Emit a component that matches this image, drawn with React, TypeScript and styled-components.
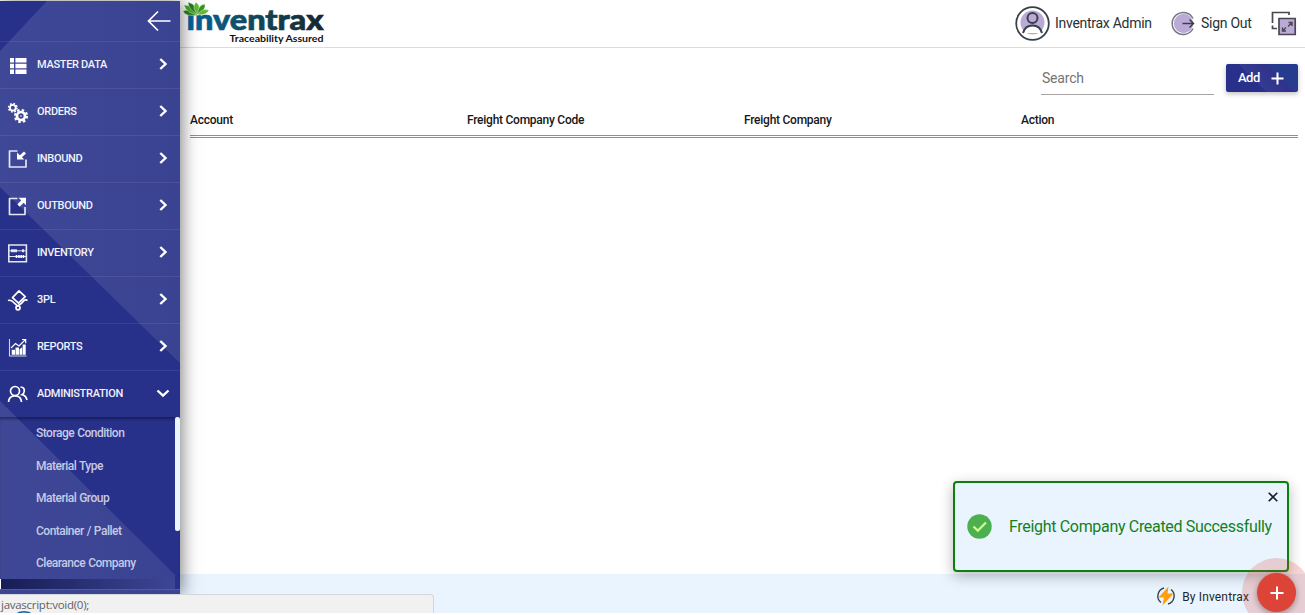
import React from "react";
import styled, { createGlobalStyle } from "styled-components";

const GlobalStyle = createGlobalStyle`
  * { box-sizing: border-box; }
  body { margin: 0; background: #fff; font-family: Roboto, "Liberation Sans", sans-serif; overflow: hidden; }
`;

const Page = styled.div`
  position: relative;
  display: flex;
  width: 1305px;
  height: 615px;
  padding-bottom: 2px;
  overflow: hidden;
  background: #fff;
`;

const Sidebar = styled.aside`
  position: relative;
  z-index: 2;
  flex: 0 0 180px;
  height: 594px;
  margin-top: 1px;
  background: #28318a;
  box-shadow: 2px 0 16px rgba(0, 0, 0, 0.5);
`;

const Facets = styled.svg`
  position: absolute;
  inset: 0;
  display: block;
`;

const SidebarContent = styled.div`
  position: relative;
  display: flex;
  flex-direction: column;
`;

const CollapseRow = styled.div`
  display: flex;
  justify-content: flex-end;
  align-items: center;
  height: 41px;
  padding-right: 9px;
  border-bottom: 1px solid rgba(255, 255, 255, 0.08);
`;

const MenuItem = styled.div<{ $last?: boolean }>`
  display: flex;
  align-items: center;
  height: ${(p) => (p.$last ? 46 : 47)}px;
  padding: 0 10px 2px 7px;
  color: #f1f2fa;
  font-size: 11px;
  font-weight: 500;
  border-bottom: ${(p) => (p.$last ? "0" : "1px solid rgba(255, 255, 255, 0.08)")};
`;

const MenuIcon = styled.span`
  display: flex;
  width: 22px;
  height: 22px;
  margin: 3px 8px 0 0;
`;

const MenuLabel = styled.span`
  flex: 1;
  white-space: nowrap;
  letter-spacing: -0.31px;
`;

const Submenu = styled.div`
  position: relative;
  height: 162px;
  padding-left: 36px;
  box-shadow: inset 0 3px 3px -1px rgba(0, 0, 0, 0.4);
`;

const SubmenuItem = styled.div`
  display: flex;
  align-items: center;
  height: 32.5px;
  color: #c6cae5;
  font-size: 12px;
  font-weight: 500;
  letter-spacing: -0.5px;
  word-spacing: 0.5px;
`;

const ScrollThumb = styled.div`
  position: absolute;
  top: 0;
  right: 0;
  width: 5px;
  height: 114px;
  border-radius: 2px;
  background: #ebf5ff;
`;

const SubmenuEnd = styled.div`
  width: 175px;
  height: 10px;
  border-left: 1px solid #fff;
  background: linear-gradient(90deg, #171d55, #3d4696);
`;

const SidebarEnd = styled.div`
  height: 5px;
  border-top: 1px solid #515aa5;
  background: #3c4594;
`;

const Main = styled.main`
  display: flex;
  flex: 1;
  flex-direction: column;
  min-width: 0;
`;

const Header = styled.header`
  display: flex;
  align-items: center;
  justify-content: space-between;
  height: 48px;
  padding-right: 8px;
  border-bottom: 1px solid #dcdcdc;
`;

const Logo = styled.svg`
  display: block;
  align-self: flex-start;
`;

const UserTools = styled.div`
  display: flex;
  align-items: center;
  color: #263238;
  font-size: 14px;
`;

const ToolLabel = styled.span<{ $gap: number; $width: number }>`
  width: ${(p) => p.$width}px;
  margin: -1px ${(p) => p.$gap}px 0 5px;
  white-space: nowrap;
  letter-spacing: -0.28px;
`;

const Body = styled.section`
  flex: 1;
  padding: 16px 7px 0 10px;
`;

const Toolbar = styled.div`
  display: flex;
  justify-content: flex-end;
  gap: 12px;
`;

const SearchField = styled.div`
  width: 173px;
  height: 31px;
  padding: 6px 0 0 1px;
  color: #747474;
  font-size: 14px;
  line-height: 17px;
  letter-spacing: -0.2px;
  border-bottom: 1px solid #a8a3a3;
`;

const AddButton = styled.div`
  display: flex;
  align-items: center;
  width: 72px;
  height: 28px;
  padding-left: 12px;
  border-radius: 2px;
  color: #fff;
  font-size: 13px;
  font-weight: 500;
  letter-spacing: -0.5px;
  background: linear-gradient(45deg, #28308a 38%, transparent 38%),
    linear-gradient(225deg, #263b8d 32%, #30318a 32%, #333c92 60%, #28308a 60%);
  box-shadow: 0 2px 5px rgba(0, 0, 0, 0.25);
  svg { margin: 1px 0 0 11px; }
  span { margin-top: -2px; }
`;

const TableHead = styled.div`
  display: grid;
  grid-template-columns: repeat(4, 1fr);
  height: 43px;
  padding-top: 18px;
  color: #171717;
  font-size: 12px;
  font-weight: 500;
  line-height: 14px;
  letter-spacing: -0.25px;
  border-bottom: 3px double #8f8f8f;
`;

const Footer = styled.footer`
  display: flex;
  align-items: center;
  justify-content: flex-end;
  gap: 6px;
  height: 39px;
  padding: 4px 56px 0 0;
  color: #212529;
  font-size: 12px;
  letter-spacing: 0.15px;
  background: #e9f4ff;
  span { margin-top: 2px; }
`;

const Toast = styled.div`
  position: absolute;
  z-index: 3;
  left: 953px;
  top: 481px;
  display: flex;
  align-items: center;
  width: 336px;
  height: 91px;
  padding-left: 12px;
  border: 2px solid #0a800d;
  border-radius: 4px;
  color: #15801b;
  font-size: 16px;
  background: #e9f4ff;
  box-shadow: 0 4px 14px rgba(0, 0, 0, 0.28);
`;

const ToastText = styled.span`
  margin-left: 17px;
  white-space: nowrap;
  letter-spacing: -0.32px;
`;

const CloseIcon = styled.svg`
  position: absolute;
  top: 9px;
  right: 9px;
`;

const FloatingAdd = styled.div`
  position: absolute;
  z-index: 4;
  left: 1257px;
  top: 573px;
  display: flex;
  align-items: center;
  justify-content: center;
  width: 39px;
  height: 39px;
  border-radius: 50%;
  background: #db4437;
  box-shadow: 0 0 0 15px rgba(219, 68, 55, 0.22), 0 2px 6px rgba(0, 0, 0, 0.4);
`;

const BottomEdge = styled.div`
  position: absolute;
  z-index: 6;
  left: 0;
  right: 0;
  bottom: 0;
  height: 2px;
  background: #fff;
`;

const StatusBar = styled.div`
  position: absolute;
  z-index: 5;
  left: 0;
  top: 594px;
  width: 434px;
  height: 20px;
  padding: 3px 0 0 1px;
  border: 1px solid #d3d7da;
  border-left: 0;
  border-bottom: 0;
  border-top-right-radius: 4px;
  color: #5f6163;
  font-family: "Open Sans", "Noto Sans", sans-serif;
  font-size: 11.5px;
  line-height: 14px;
  letter-spacing: -0.27px;
  background: #f1f1f1;
`;

const StatusArc = styled.svg`
  position: absolute;
  left: 12px;
  top: 15px;
`;

const icons: Record<string, React.ReactNode> = {
  master: (
    <g fill="#fff">
      <path d="M3 3h4v4.4H3zM8.400 3H19.500v4.400H8.400zM3 8.800h4v4.400H3zM8.400 8.800H19.500v4.400H8.400zM3 14.600h4V19H3zM8.400 14.600H19.500V19H8.400z" />
    </g>
  ),
  orders: (
    <g fill="none" stroke="#fff">
      <circle cx="5.800" cy="5.800" r="2.9" strokeWidth="1.8" />
      <circle cx="5.800" cy="5.800" r="4.2" strokeWidth="1.6" strokeDasharray="1.7 1.6" />
      <circle cx="14" cy="14" r="4" strokeWidth="2.7" />
      <circle cx="14" cy="14" r="6" strokeWidth="2.2" strokeDasharray="2.5 2.21" />
      <circle cx="14" cy="14" r=".8" fill="#fff" stroke="none" />
    </g>
  ),
  inbound: (
    <g fill="none" stroke="#e4e6f4" strokeWidth="1.7" strokeLinejoin="round">
      <path d="M10.500 2H2.500V18H19V10.500" />
      <path d="M18 3.500L12.500 8.500" strokeWidth="3" stroke="#fff" />
      <path d="M10 3.500V10.500h7.300z" fill="#fff" stroke="none" />
    </g>
  ),
  outbound: (
    <g fill="none" stroke="#e4e6f4" strokeWidth="1.7" strokeLinejoin="round">
      <path d="M10.500 2.500H2.500V18.500H18V11" />
      <path d="M11.500 9.500L16 5" strokeWidth="3.200" stroke="#fff" />
      <path d="M11.500 1.800h7.500v7.500z" fill="#fff" stroke="none" />
    </g>
  ),
  inventory: (
    <g fill="none" stroke="#e4e6f4" strokeWidth="1.6">
      <path d="M1.800 2h17.600v16.700H1.800z" />
      <path d="M2 7.800h17M2 13.500h17" strokeWidth="1" />
      <path d="M5 6.300v3M7 6.300v3M9 6.300v3M16 6.300v3M9.500 12v3M12 12v3M14.200 12v3M16.400 12v3" stroke="#fff" />
    </g>
  ),
  pl: (
    <g fill="none" stroke="#fff" strokeWidth="1.7" strokeLinejoin="round">
      <path d="M12 .900L18.200 6.700L11.500 13.200L5.500 7.700zM1 10.500Q4 9.500 6.500 12.300L10.500 15.900Q15 13.700 17 10.500Q18.500 9.300 20.500 10.500" />
      <circle cx="11" cy="17.800" r="2" />
    </g>
  ),
  reports: (
    <g fill="none" stroke="#fff">
      <path d="M2.500 2v17H19.500" strokeWidth="1.1" opacity=".8" />
      <path d="M4.700 17.800v-5H8v5zM8.500 17.800v-7.300h3.500v7.300zM12.500 17.800v-5.500l2.700-2v7.500zM15.700 17.800V7.500h3v10.300z" fill="#fff" stroke="none" />
      <path d="M4 11L8.500 6.500L12 9L18 3M15 2.500h3.700v3.700" strokeWidth="1.2" />
    </g>
  ),
  admin: (
    <g fill="none" stroke="#fff" strokeWidth="1.700">
      <circle cx="8" cy="7" r="4.500" />
      <path d="M1.500 18Q2 11.800 8 11.800T14.500 18M13.500 3Q18 3.500 17.200 7.500Q17 9.500 15 10.700Q19 11.500 20 16" />
    </g>
  ),
};

const menu = [
  { id: "master", label: "MASTER DATA" },
  { id: "orders", label: "ORDERS" },
  { id: "inbound", label: "INBOUND" },
  { id: "outbound", label: "OUTBOUND" },
  { id: "inventory", label: "INVENTORY" },
  { id: "pl", label: "3PL" },
  { id: "reports", label: "REPORTS" },
  { id: "admin", label: "ADMINISTRATION" },
];

const submenu = ["Storage Condition", "Material Type", "Material Group", "Container / Pallet", "Clearance Company"];
const columns = ["Account", "Freight Company Code", "Freight Company", "Action"];

const Chevron = ({ down }: { down?: boolean }) => (
  <svg width="14" height="14" viewBox="0 0 14 14" fill="none" stroke="#fff" strokeWidth="2.4">
    <path d={down ? "M1.500 4.500L7 9.700L12.500 4.500" : "M4.300 2L9.500 7L4.300 12"} />
  </svg>
);

const BrandLogo = () => (
  <Logo width="150" height="47" viewBox="180 0 150 47">
    <defs>
      <linearGradient id="brand" gradientUnits="userSpaceOnUse" x1="187" x2="323" y1="0" y2="0">
        <stop offset="0" stopColor="#04659c" />
        <stop offset=".5" stopColor="#12475c" />
        <stop offset="1" stopColor="#16262f" />
      </linearGradient>
    </defs>
    <text x="186.500" y="30.300" fill="url(#brand)" stroke="url(#brand)" strokeWidth=".7" fontFamily="Lato" fontWeight="900" fontSize="27.500" textLength="137" lengthAdjust="spacingAndGlyphs">
      {"\u0131nventrax"}
    </text>
    <text x="229.500" y="41.500" fill="#111" fontFamily="Lato" fontWeight="700" fontSize="10" textLength="94" lengthAdjust="spacingAndGlyphs">
      Traceability Assured
    </text>
    <g stroke="#fff" strokeWidth=".4">
      <path d="M198 15Q192 8 183 11Q185 17 198 15Z" fill="#278326" />
      <path d="M198 15Q195 5 184 5Q186 13 198 15Z" fill="#48a526" />
      <path d="M198 15Q198 5 188 2Q188 9 198 15Z" fill="#237d21" />
      <path d="M198 15Q202 7 196 2Q191 8 198 15Z" fill="#62b92d" />
      <path d="M198 15Q197 5 205 4Q206 10 198 15Z" fill="#359426" />
      <path d="M198 15Q201 8 209 10Q207 15 198 15Z" fill="#62b92d" />
    </g>
  </Logo>
);

export default function App() {
  return (
    <>
      <GlobalStyle />
      <Page>
        <Sidebar>
          <Facets width="180" height="594" viewBox="0 1 180 594">
            <defs>
              <linearGradient id="facet" x1="0" x2="1">
                <stop offset="0" stopColor="#3f4896" />
                <stop offset="1" stopColor="#394392" />
              </linearGradient>
            </defs>
            <path d="M47 1H180V363L0 187V51Z" fill="url(#facet)" />
            <path d="M0 401L175 575V595H0Z" fill="url(#facet)" />
          </Facets>
          <SidebarContent>
            <CollapseRow>
              <svg width="24" height="22" viewBox="0 0 24 22" fill="none" stroke="#fff" strokeWidth="1.700">
                <path d="M23.500 11H2M11 1.500L1.500 11L11 20.500" />
              </svg>
            </CollapseRow>
            {menu.map((m) => (
              <MenuItem key={m.id} $last={m.id === "admin"}>
                <MenuIcon>
                  <svg width="22" height="22" viewBox="0 0 22 22">{icons[m.id]}</svg>
                </MenuIcon>
                <MenuLabel>{m.label}</MenuLabel>
                <Chevron down={m.id === "admin"} />
              </MenuItem>
            ))}
            <Submenu>
              {submenu.map((s) => (
                <SubmenuItem key={s}>{s}</SubmenuItem>
              ))}
              <ScrollThumb />
            </Submenu>
            <SubmenuEnd />
            <SidebarEnd />
          </SidebarContent>
        </Sidebar>
        <Main>
          <Header>
            <BrandLogo />
            <UserTools>
              <svg width="35" height="35" viewBox="0 0 35 35" fill="none" stroke="#36404b">
                <circle cx="17.500" cy="17.500" r="16.300" strokeWidth="1.800" />
                <circle cx="17.500" cy="16.500" r="12" fill="#bcaad6" stroke="none" />
                <path d="M8 27Q10 19.500 17.500 19.500T27 27" fill="#fff" strokeWidth="2" />
                <circle cx="17.500" cy="12" r="5" fill="#bcaad6" strokeWidth="2" />
              </svg>
              <ToolLabel $gap={19} $width={97}>Inventrax Admin</ToolLabel>
              <svg width="25" height="25" viewBox="0 0 25 25" fill="none">
                <circle cx="12.500" cy="12.500" r="9.700" fill="#bcaad6" />
                <path d="M22 7.500A11 11 0 1 0 22 17.500" stroke="#777582" strokeWidth="1.500" />
                <path d="M11.500 12.500H22.500M18.500 8.500L22.500 12.500L18.500 16.500" stroke="#39404a" strokeWidth="1.500" />
              </svg>
              <ToolLabel $gap={19} $width={51}>Sign Out</ToolLabel>
              <svg width="26" height="26" viewBox="0 0 26 26" fill="none" stroke="#4a4751" strokeWidth="1.700">
                <path d="M6 17.500H1.500V14.500M1.500 12V1.500H18V4" />
                <path d="M8 7.500H24.200V23.500H8z" fill="#bcaad6" />
                <path d="M17.500 11.500h3.500V15M20.800 11.700L17 15.500M11.500 16.500v3.500H15M11.700 19.800L15 16.500" strokeWidth="1.400" />
              </svg>
            </UserTools>
          </Header>
          <Body>
            <Toolbar>
              <SearchField>Search</SearchField>
              <AddButton>
                <span>Add</span>
                <svg width="13" height="13" viewBox="0 0 13 13" stroke="#fff" strokeWidth="2">
                  <path d="M6.500 .500v12M.500 6.500h12" />
                </svg>
              </AddButton>
            </Toolbar>
            <TableHead>
              {columns.map((c) => (
                <span key={c}>{c}</span>
              ))}
            </TableHead>
          </Body>
          <Footer>
            <svg width="20" height="20" viewBox="0 0 20 20" fill="none">
              <path d="M8 2A8.300 8.300 0 0 0 5 16.500M12 18A8.300 8.300 0 0 0 15 3.500" stroke="#39404a" strokeWidth="1.400" />
              <path d="M12.500 .500L2.500 11.500H8L6.500 19.500L17.500 7.500H11.500Z" fill="#ff9d0a" />
            </svg>
            <span>By Inventrax</span>
          </Footer>
        </Main>
        <Toast>
          <svg width="25" height="25" viewBox="0 0 25 25" fill="none">
            <circle cx="12.500" cy="12.500" r="12.200" fill="#4caf50" />
            <path d="M6.500 12.500L10.800 16.700L19 8.500" stroke="#ccff90" strokeWidth="2.300" />
          </svg>
          <ToastText>Freight Company Created Successfully</ToastText>
          <CloseIcon width="10" height="10" viewBox="0 0 10 10" stroke="#1a2125" strokeWidth="1.600">
            <path d="M.700 .700L9.300 9.300M9.300 .700L.700 9.300" />
          </CloseIcon>
        </Toast>
        <FloatingAdd>
          <svg width="14" height="14" viewBox="0 0 14 14" stroke="#fff" strokeWidth="2">
            <path d="M7 .500v13M.500 7h13" />
          </svg>
        </FloatingAdd>
        <StatusBar>
          javascript:void(0);
          <StatusArc width="24" height="6" viewBox="0 0 24 6" fill="none" stroke="#1f6393" strokeWidth="1.300">
            <path d="M2.500 5Q12 -1.500 21.500 5" fill="#cbe3f3" />
          </StatusArc>
        </StatusBar>
        <BottomEdge />
      </Page>
    </>
  );
}
